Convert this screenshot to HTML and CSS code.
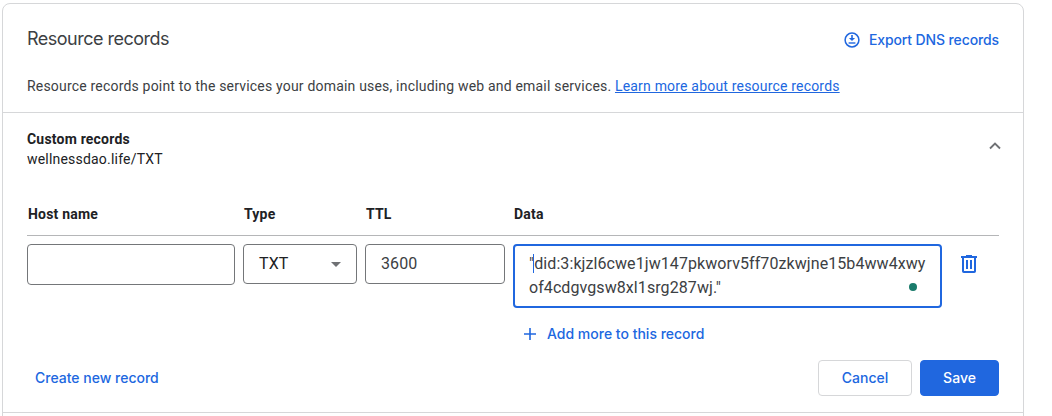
FILE: index.html
```html
<!DOCTYPE html>
<html lang="en">
<head>
<meta charset="utf-8">
<title>Resource records</title>
<link rel="stylesheet" href="styles.css">
</head>
<body>
<main class="card">
  <header class="intro">
    <div class="intro-top">
      <h1 class="title">Resource records</h1>
      <a class="action export">
        <svg width="16" height="16" viewBox="0 0 16 16" fill="none" stroke="currentColor">
          <circle cx="8" cy="8" r="6.9" stroke-width="1.5"/>
          <path d="M8 3v4" stroke-width="1.6"/>
          <path d="M4.9 6h6.2L8 9.1z" fill="currentColor" stroke="none"/>
          <path d="M4.6 11h6.8" stroke-width="1.4"/>
        </svg>
        <span class="export-label">Export DNS records</span>
      </a>
    </div>
    <p class="description">Resource records point to the services your domain uses, including web and email services. <a class="learn">Learn more about resource records</a></p>
  </header>
  <section class="records">
    <div class="summary">
      <div>
        <h2 class="summary-title">Custom records</h2>
        <p class="summary-text">wellnessdao.life/TXT</p>
      </div>
      <svg class="chevron" width="12" height="8" viewBox="0 0 12 8" fill="none" stroke="#6f7174" stroke-width="1.9"><path d="M1 6.5l5-5 5 5"/></svg>
    </div>
    <div class="grid heads">
      <span>Host name</span><span>Type</span><span>TTL</span><span>Data</span>
    </div>
    <div class="grid fields">
      <div class="field host"></div>
      <div class="field select">TXT
        <svg width="10" height="5" viewBox="0 0 10 5"><path d="M0 0h10L5 5z" fill="#6f7174"/></svg>
      </div>
      <div class="field">3600</div>
      <div class="field data"><span class="line">"<i class="caret"></i>did:3:kjzl6cwe1jw147pkworv5ff70zkwjne15b4ww4xwy</span><span class="line second">of4cdgvgsw8xl1srg287wj."</span><i class="dot"></i></div>
      <svg class="trash" width="16" height="18" viewBox="0 0 16 18" fill="none" stroke="currentColor" stroke-width="2"><path d="M0 2h16M5 1h6M2 2v14.2q0 .8.8.8h10.4q.8 0 .8-.8V2M6 5v9M10 5v9"/></svg>
    </div>
    <a class="action add">
      <svg width="12" height="12" viewBox="0 0 12 12" stroke="currentColor" stroke-width="1.6"><path d="M6 0v12M0 6h12"/></svg>
      <span class="add-label">Add more to this record</span>
    </a>
    <div class="footer">
      <a class="action create">Create new record</a>
      <div class="buttons">
        <button class="button">Cancel</button>
        <button class="button primary">Save</button>
      </div>
    </div>
  </section>
</main>
</body>
</html>
```

FILE: styles.css
```css
* { box-sizing: border-box; margin: 0; }
body {
  height: 416px;
  overflow: hidden;
  padding: 3px 0 0 2px;
  background: #fff;
  color: #202124;
  font: 14px/20px Roboto, sans-serif;
}
.card {
  width: 1022px;
  height: 430px;
  border: 1px solid #d6d7d9;
  border-radius: 8px;
}
.intro {
  height: 109px;
  padding: 23px 24px 0;
  border-bottom: 1px solid #d6d7d9;
}
.intro-top { display: flex; justify-content: space-between; height: 24px; }
.title {
  font: 400 18px/24px Inter, sans-serif;
  letter-spacing: -0.5px;
  color: #3c4043;
}
.action {
  display: flex;
  align-items: center;
  font: 500 14px/20px Inter, sans-serif;
  color: #2067df;
}
.export { gap: 9px; padding-top: 2px; letter-spacing: -0.12px; }
.description {
  margin-top: 25px;
  letter-spacing: 0.19px;
  white-space: nowrap;
  color: #3c4043;
}
.learn { color: #2067df; text-decoration: underline; }
.records { height: 300px; padding: 16px 24px 0; border-bottom: 1px solid #d6d7d9; }
.summary { display: flex; justify-content: space-between; height: 75px; }
.summary-title { font: 700 14px/20px Roboto, sans-serif; letter-spacing: 0.2px; }
.summary-text { letter-spacing: 0.2px; }
.chevron { margin: 13px -2px 0 0; }
.grid { display: grid; grid-template-columns: 208px 114px 140px 429px 16px; column-gap: 8px; }
.heads {
  height: 32px;
  padding-left: 1px;
  border-bottom: 1px solid #b5b6b8;
  font-weight: 700;
  letter-spacing: 0.2px;
}
.fields { margin-top: 8px; align-items: start; }
.field {
  height: 40px;
  padding: 0 15px;
  border: 1px solid #747679;
  border-radius: 4px;
  font-size: 16px;
  line-height: 38px;
  letter-spacing: 0.1px;
  color: #3c4043;
}
.host { height: 41px; }
.select { display: flex; align-items: center; justify-content: space-between; color: #202124; }
.data {
  position: relative;
  height: 64px;
  padding: 6px 14px;
  border: 2px solid #2067df;
  line-height: 24px;
}
.line { display: block; white-space: nowrap; letter-spacing: 0.08px; }
.caret { display: inline-block; width: 1px; height: 19px; margin-left: -1px; background: #2067df; vertical-align: -4px; }
.dot { position: absolute; right: 23px; bottom: 15px; width: 8px; height: 8px; border-radius: 50%; background: #1a7b6b; }
.trash { margin: 11px 0 0 11px; color: #2067df; }
.add { gap: 11px; width: 200px; margin: 16px 0 0 497px; }
.footer { display: flex; justify-content: space-between; margin-top: 16px; }
.create { padding-left: 8px; }
.buttons { display: flex; gap: 8px; }
.button {
  width: 94px;
  height: 36px;
  padding: 0;
  border: 1px solid #d6d7d9;
  border-radius: 4px;
  background: #fff;
  font: 500 14px/20px Inter, sans-serif;
  color: #2067df;
}
.primary { width: 79px; border-color: #2067df; background: #2067df; color: #fff; }
```
